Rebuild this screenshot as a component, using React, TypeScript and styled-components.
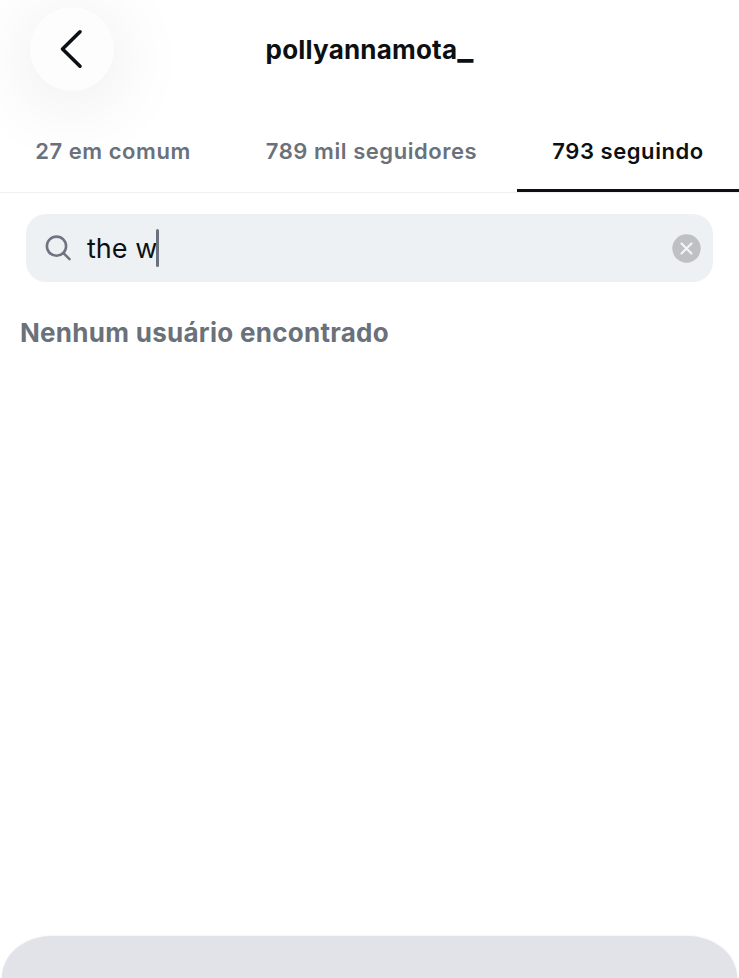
import React from "react";
import styled, { createGlobalStyle } from "styled-components";

const GlobalStyle = createGlobalStyle`
  * { box-sizing: border-box; }
  body { margin: 0; background: #fff; font-family: Inter, sans-serif; }
`;
const Screen = styled.main`
  display: flex; flex-direction: column; height: 978px; overflow: hidden; background: #fff;
`;
const Header = styled.header`
  display: grid; grid-template-columns: 114px 1fr 114px; height: 112px; align-items: start;
  padding-top: 7px;
`;
const BackButton = styled.button`
  width: 84px; height: 84px; margin-left: 30px; padding: 0; border: 0; border-radius: 50%;
  background: #fdfdfd; box-shadow: 0 10px 76px 6px rgba(0, 0, 0, 0.08);
  svg { display: block; width: 84px; height: 84px; }
`;
const Title = styled.h1`
  margin: 0; padding-top: 1px; font-size: 26px; line-height: 84px; font-weight: 700;
  text-align: center; color: #0c1014; letter-spacing: 0.2px; white-space: nowrap;
`;
const Underscore = styled.span`
  font-size: 34px; line-height: 0; letter-spacing: 0;
`;
const Tabs = styled.nav`
  display: grid; grid-template-columns: 226px 291px 222px; height: 81px; border-bottom: 1px solid #eff0f2;
`;
const Tab = styled.button<{ $active?: boolean }>`
  height: 80px; padding: 1px 0 0; border: 0; background: none; white-space: nowrap;
  border-bottom: 3px solid ${(p) => (p.$active ? "#0c1014" : "transparent")};
  color: ${(p) => (p.$active ? "#0c1014" : "#6a717a")};
  font: 600 22px Inter, sans-serif; letter-spacing: 0.55px;
`;
const Search = styled.div`
  display: flex; align-items: center; height: 68px; margin: 21px 26px 0; padding: 0 12px 0 19px;
  border-radius: 20px; background: #eef1f4;
`;
const Query = styled.span`
  margin-left: 14px; font-size: 27px; color: #0c1014;
`;
const Caret = styled.i`
  width: 3px; height: 38px; margin-left: -1px; border-radius: 1.5px; background: #69717d;
`;
const Clear = styled.button`
  width: 29px; height: 29px; margin: 1px 0 0 auto; padding: 0; border: 0; background: none;
  svg { display: block; }
`;
const Message = styled.p`
  margin: 34px 20px 0; font-size: 26px; line-height: 34px; font-weight: 700;
  letter-spacing: 0.28px; color: #6a717a;
`;
const Keyboard = styled.footer`
  height: 42px; margin: auto 2px 0; border-radius: 50px 50px 0 0 / 42px 42px 0 0;
  background: #e2e3e8; box-shadow: 0 0 2px #e2e3e8;
`;

export default function App() {
  return (
    <Screen>
      <GlobalStyle />
      <Header>
        <BackButton aria-label="Voltar">
          <svg viewBox="0 0 84 84" fill="none" stroke="#0c1014" strokeWidth="3.6" strokeLinecap="round" strokeLinejoin="round">
            <path d="M50 24.8 32.5 42 50 59.2" />
          </svg>
        </BackButton>
        <Title>pollyannamota<Underscore>_</Underscore></Title>
      </Header>
      <Tabs>
        <Tab>27 em comum</Tab>
        <Tab>789 mil seguidores</Tab>
        <Tab $active>793 seguindo</Tab>
      </Tabs>
      <Search>
        <svg width="28" height="28" viewBox="0 0 28 28" fill="none" stroke="#6f7580" strokeWidth="2.6" strokeLinecap="round">
          <circle cx="11.5" cy="12.2" r="9.6" /><path d="m18.5 19.2 6 6" />
        </svg>
        <Query>the w</Query>
        <Caret />
        <Clear aria-label="Limpar">
          <svg width="29" height="29" viewBox="0 0 29 29" stroke="#f3f5f7" strokeWidth="2.2" strokeLinecap="round">
            <circle cx="14.5" cy="14.5" r="14.2" fill="#bec0c2" stroke="none" /><path d="m9.5 9.5 10 10M19.5 9.5l-10 10" />
          </svg>
        </Clear>
      </Search>
      <Message>Nenhum usuário encontrado</Message>
      <Keyboard />
    </Screen>
  );
}
